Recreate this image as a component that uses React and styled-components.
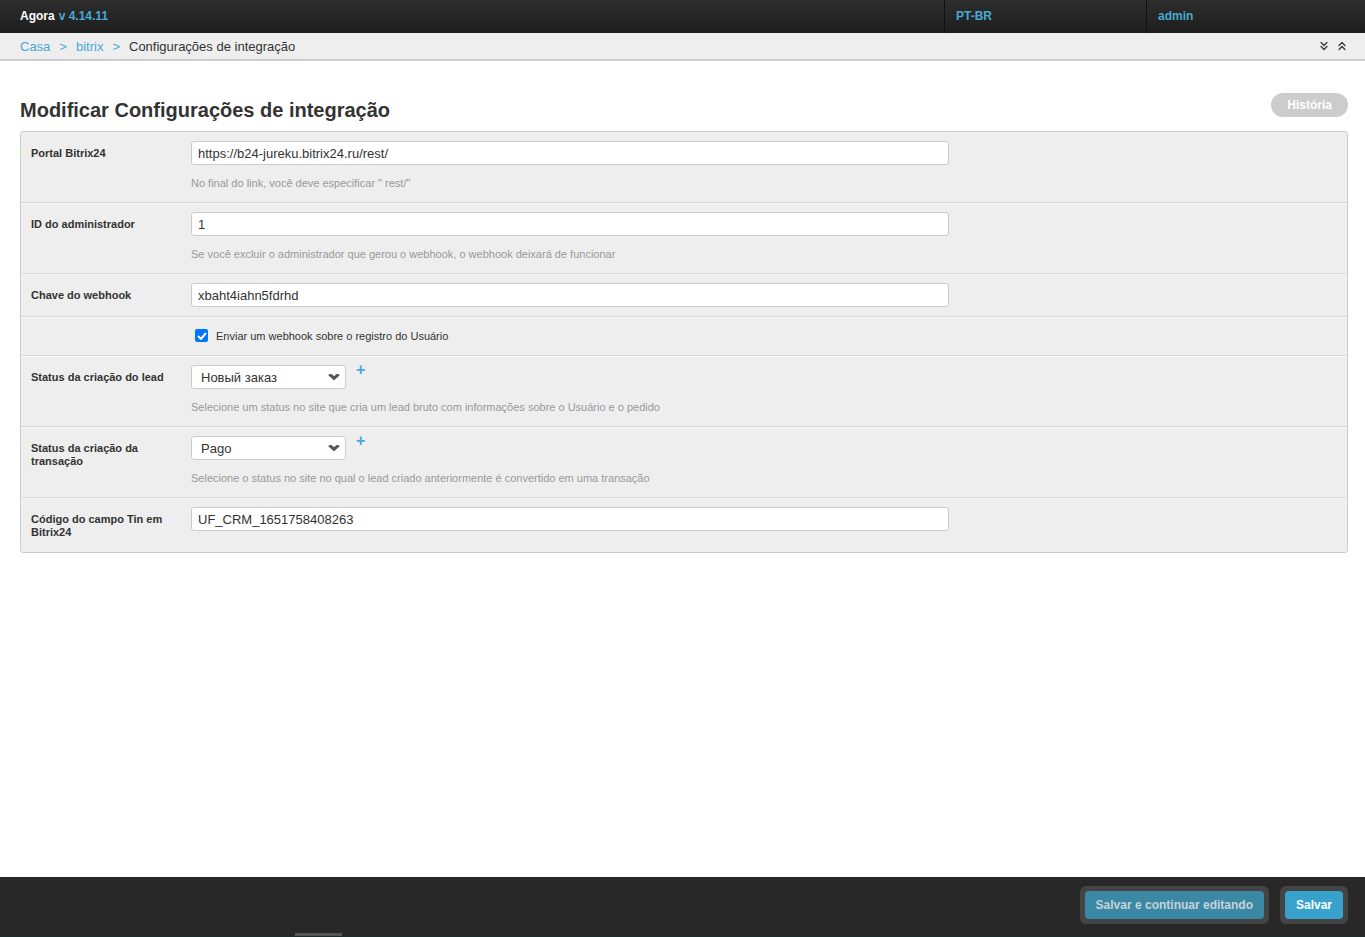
import React from 'react'
import styled, { createGlobalStyle } from 'styled-components'
import { ChevronsDown, ChevronsUp } from 'lucide-react'

const GlobalStyle = createGlobalStyle`
  html, body { margin: 0; padding: 0; }
  body {
    font-family: "Liberation Sans", Arial, sans-serif;
    background: #fff;
    color: #333;
  }
  * { box-sizing: border-box; }
`

const Page = styled.div`
  display: flex;
  flex-direction: column;
  min-height: 937px;
`
const Header = styled.div`
  display: flex;
  height: 33px;
  background: linear-gradient(#2e2e2e, #1d1d1d);
  font-size: 12px;
  font-weight: bold;
`
const Brand = styled.div`
  flex: 1;
  display: flex;
  align-items: center;
  padding: 0 0 2px 20px;
  color: #fff;
  span { color: #47a9d5; margin-left: 4px; }
`
const HeaderCell = styled.div`
  width: ${p => p.w}px;
  display: flex;
  align-items: center;
  padding: 0 0 2px 11px;
  border-left: 1px solid #111;
  color: #47a9d5;
`
const Crumbs = styled.div`
  display: flex;
  align-items: center;
  height: 28px;
  padding: 0 16px 0 20px;
  background: #eee;
  border-bottom: 2px solid #ccc;
  font-size: 13px;
  color: #333;
`
const CrumbLink = styled.span`
  color: #47a9d5;
`
const Sep = styled.span`
  color: #47a9d5;
  margin: 0 9px;
`
const CrumbTools = styled.div`
  margin-left: auto;
  display: flex;
  gap: 4px;
  color: #444;
`
const Content = styled.div`
  flex: 1;
  padding: 32px 17px 0 20px;
`
const TitleRow = styled.div`
  display: flex;
  justify-content: space-between;
  align-items: flex-start;
  height: 38px;
`
const Title = styled.h1`
  margin: 6px 0 0;
  font-size: 20px;
  font-weight: bold;
  color: #333;
`
const HistoryBtn = styled.div`
  height: 24px;
  padding: 0 16px;
  border-radius: 12px;
  background: #ccc;
  color: #fff;
  font-size: 12px;
  font-weight: bold;
  display: flex;
  align-items: center;
`
const Fieldset = styled.div`
  background: #eee;
  border: 1px solid #ccc;
  border-radius: 3px;
`
const Row = styled.div`
  display: flex;
  padding: 9px 10px ${p => (p.help ? 12 : 9)}px;
  border-bottom: 1px solid #d9d9d9;
  box-shadow: 0 1px 0 #f6f6f6;
  &:last-child { border-bottom: none; box-shadow: none; padding-bottom: 13px; }
`
const Label = styled.div`
  width: 160px;
  flex-shrink: 0;
  padding-top: 6px;
  padding-right: 20px;
  font-size: 11px;
  font-weight: bold;
  line-height: 13px;
  color: #333;
`
const Field = styled.div`
  display: flex;
  flex-direction: column;
`
const Input = styled.div`
  width: 758px;
  height: 24px;
  background: #fff;
  border: 1px solid #ccc;
  border-radius: 3px;
  padding-left: 6px;
  display: flex;
  align-items: center;
  font-size: 13px;
  color: #333;
`
const Help = styled.div`
  margin-top: 11px;
  font-size: 11px;
  color: #999;
  line-height: 14px;
`
const SelectLine = styled.div`
  display: flex;
  align-items: flex-start;
  gap: 10px;
`
const Select = styled.div`
  width: 155px;
  height: 24px;
  background: #fff;
  border: 1px solid #ccc;
  border-radius: 3px;
  padding: 0 5px 0 9px;
  display: flex;
  align-items: center;
  justify-content: space-between;
  font-size: 13px;
  color: #333;
`
const Plus = styled.span`
  color: #47a9d5;
  font-size: 16px;
  font-weight: bold;
  line-height: 10px;
`
const CheckRow = styled.div`
  display: flex;
  align-items: center;
  padding: 12px 10px 13px 174px;
  border-bottom: 1px solid #d9d9d9;
  box-shadow: 0 1px 0 #f6f6f6;
  font-size: 11px;
  color: #333;
`
const Check = styled.span`
  width: 13px;
  height: 13px;
  border-radius: 2px;
  background: #0075ff;
  margin-right: 8px;
  display: flex;
  align-items: center;
  justify-content: center;
`
const Footer = styled.div`
  height: 60px;
  background: #282828;
  border-bottom: 1px solid #1c2c2c;
  display: flex;
  justify-content: flex-end;
  align-items: center;
  gap: 11px;
  padding: 0 17px 3px 0;
  position: relative;
`
const BtnWrap = styled.div`
  background: #444;
  border-radius: 6px;
  padding: 5px;
`
const Button = styled.div`
  height: 28px;
  padding: 0 11px;
  border-radius: 4px;
  background: ${p => (p.primary ? '#37a3cc' : '#3b88a4')};
  color: ${p => (p.primary ? '#fff' : '#c5d3d8')};
  font-size: 12px;
  font-weight: bold;
  display: flex;
  align-items: center;
`
const Tab = styled.div`
  position: absolute;
  left: 295px;
  bottom: 0;
  width: 47px;
  height: 3px;
  background: #555;
`

function Arrow() {
  return (
    <svg width="12" height="8" viewBox="0 0 12 8">
      <path d="M1 2 L6 6.5 L11 2 L9 1.5 L6 4 L3 1.5 Z" fill="#555" stroke="#555" strokeWidth="1.2" strokeLinejoin="round" />
    </svg>
  )
}

function App() {
  return (
    <Page>
      <GlobalStyle />
      <Header>
        <Brand>Agora<span>v 4.14.11</span></Brand>
        <HeaderCell w={202}>PT-BR</HeaderCell>
        <HeaderCell w={219}>admin</HeaderCell>
      </Header>
      <Crumbs>
        <CrumbLink>Casa</CrumbLink>
        <Sep>&gt;</Sep>
        <CrumbLink>bitrix</CrumbLink>
        <Sep>&gt;</Sep>
        <span>Configurações de integração</span>
        <CrumbTools>
          <ChevronsDown size={14} strokeWidth={2.5} />
          <ChevronsUp size={14} strokeWidth={2.5} />
        </CrumbTools>
      </Crumbs>
      <Content>
        <TitleRow>
          <Title>Modificar Configurações de integração</Title>
          <HistoryBtn>História</HistoryBtn>
        </TitleRow>
        <Fieldset>
          <Row help>
            <Label>Portal Bitrix24</Label>
            <Field>
              <Input>https://b24-jureku.bitrix24.ru/rest/</Input>
              <Help>No final do link, você deve especificar " rest/"</Help>
            </Field>
          </Row>
          <Row help>
            <Label>ID do administrador</Label>
            <Field>
              <Input>1</Input>
              <Help>Se você excluir o administrador que gerou o webhook, o webhook deixará de funcionar</Help>
            </Field>
          </Row>
          <Row>
            <Label>Chave do webhook</Label>
            <Field>
              <Input>xbaht4iahn5fdrhd</Input>
            </Field>
          </Row>
          <CheckRow>
            <Check>
              <svg width="10" height="8" viewBox="0 0 10 8">
                <path d="M1 4 L4 7 L9 1" fill="none" stroke="#fff" strokeWidth="2" />
              </svg>
            </Check>
            Enviar um webhook sobre o registro do Usuário
          </CheckRow>
          <Row help>
            <Label>Status da criação do lead</Label>
            <Field>
              <SelectLine>
                <Select>Новый заказ<Arrow /></Select>
                <Plus>+</Plus>
              </SelectLine>
              <Help>Selecione um status no site que cria um lead bruto com informações sobre o Usuário e o pedido</Help>
            </Field>
          </Row>
          <Row help>
            <Label>Status da criação da transação</Label>
            <Field>
              <SelectLine>
                <Select>Pago<Arrow /></Select>
                <Plus>+</Plus>
              </SelectLine>
              <Help>Selecione o status no site no qual o lead criado anteriormente é convertido em uma transação</Help>
            </Field>
          </Row>
          <Row>
            <Label>Código do campo Tin em Bitrix24</Label>
            <Field>
              <Input>UF_CRM_1651758408263</Input>
            </Field>
          </Row>
        </Fieldset>
      </Content>
      <Footer>
        <BtnWrap><Button>Salvar e continuar editando</Button></BtnWrap>
        <BtnWrap><Button primary>Salvar</Button></BtnWrap>
        <Tab />
      </Footer>
    </Page>
  )
}

export default App
